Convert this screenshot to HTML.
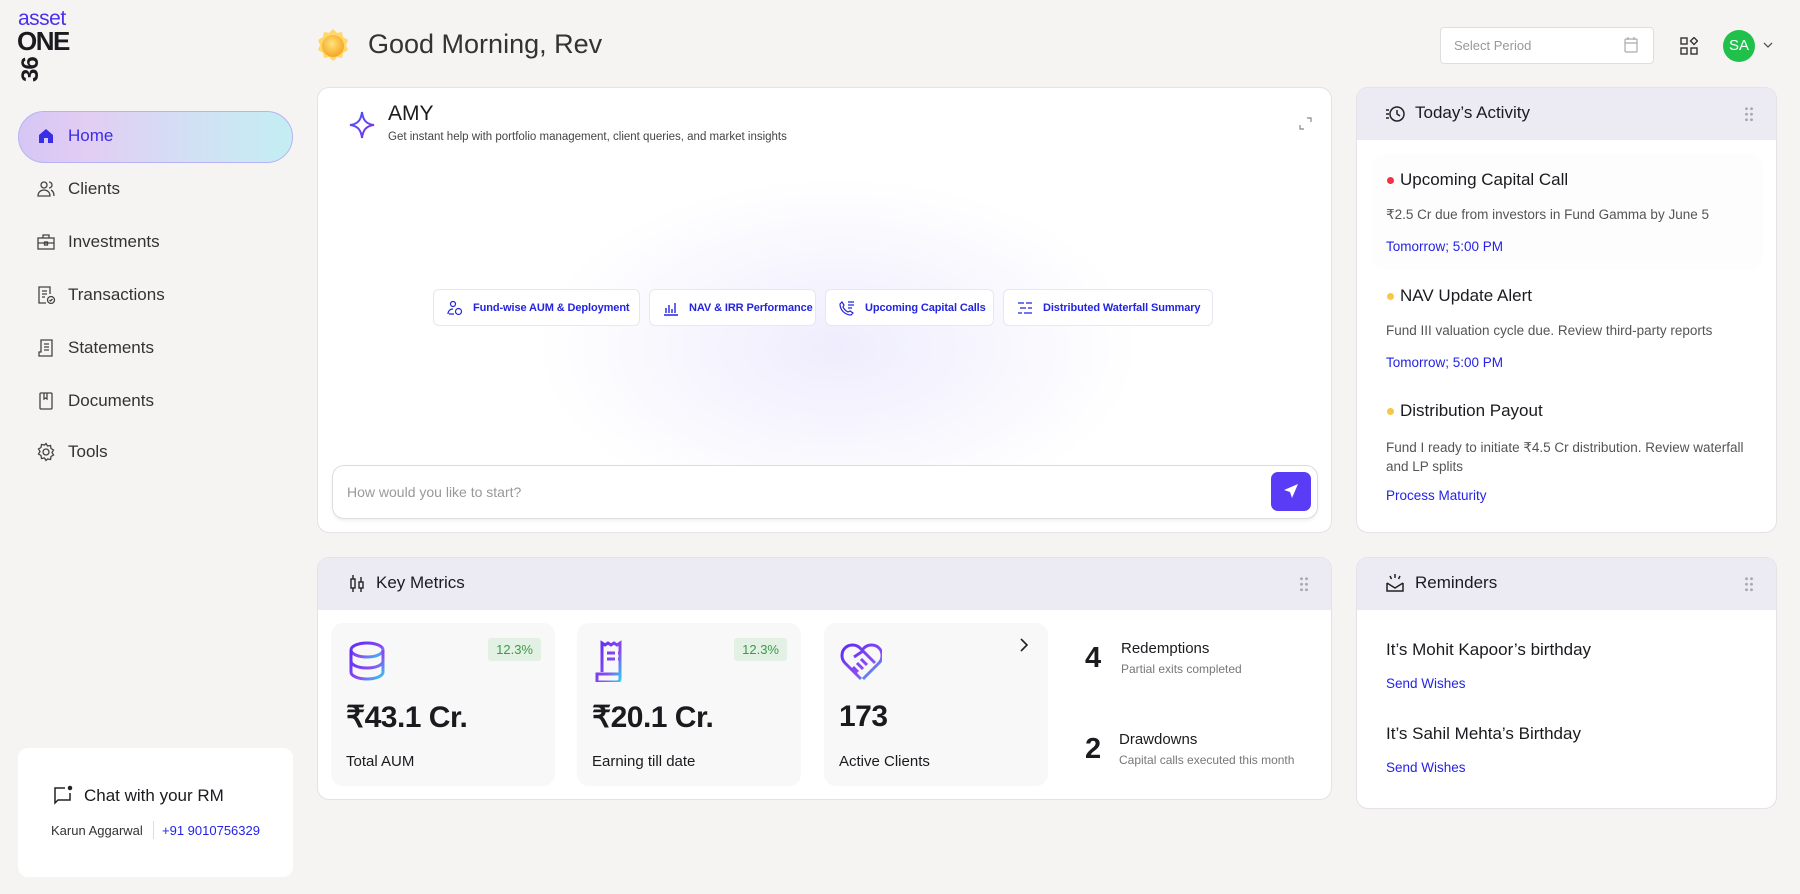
<!DOCTYPE html>
<html><head><meta charset="utf-8"><style>
*{margin:0;padding:0;box-sizing:border-box}
body{width:1800px;height:894px;background:#f5f4f2;font-family:"Liberation Sans",sans-serif;color:#1b1b1f;position:relative;overflow:hidden}
.a{position:absolute}
.card{position:absolute;background:#fff;border:1px solid #e3e2e6;border-radius:12px;overflow:hidden}
.hdr{position:absolute;left:0;top:0;right:0;height:52px;background:#ecebf3;}
.hdr .t{position:absolute;left:60px;top:15px;font-size:17px;font-weight:500}
.dots{position:absolute;right:22px;top:18px;width:10px;height:16px;background-image:radial-gradient(circle,#a9a9b0 1.3px,transparent 1.6px);background-size:5px 5.5px}
.nav{position:absolute;left:36px;font-size:17px;color:#333;display:flex;align-items:center;gap:0}
.nav svg{width:20px;height:20px;margin-right:12px}
.chip{position:absolute;top:289px;height:37px;border:1px solid #e7e6f3;border-radius:6px;background:#fff;font-size:11px;font-weight:bold;color:#2424e0;display:flex;align-items:center;padding-left:13px;gap:10px;white-space:nowrap;letter-spacing:-0.1px}
.link{color:#2323e8;font-size:13.5px}
.m{position:absolute;top:623px;width:224px;height:163px;background:#f8f8f8;border-radius:12px}
.m .v{position:absolute;left:15px;top:77px;font-size:30px;font-weight:bold;letter-spacing:-0.5px}
.m .l{position:absolute;left:15px;top:130px;font-size:15px}
.badge{position:absolute;right:14px;top:15px;background:#e2f1e3;color:#3b9a48;font-size:13px;padding:4px 8px;border-radius:3px}
</style></head><body>
<!-- logo -->
<div class="a" style="left:18px;top:7px;font-size:21px;color:#4b2ff0;font-weight:500;letter-spacing:-0.5px">asset</div>
<div class="a" style="left:17px;top:26px;font-size:26px;font-weight:bold;letter-spacing:-1.5px">ONE</div>
<svg class="a" style="left:16px;top:50px" width="30" height="34" viewBox="0 0 30 34"><text transform="translate(22,32) rotate(-90)" font-family="Liberation Sans, sans-serif" font-size="24" font-weight="bold" letter-spacing="-1" fill="#1b1b1f">36</text></svg>

<!-- nav -->
<div class="a" style="left:18px;top:111px;width:275px;height:52px;border-radius:26px;background:linear-gradient(90deg,#d6c6f5 0%,#e2cdf3 25%,#cfe3f4 70%,#c3eef3 100%);border:1px solid #b7b3f2"></div>
<div class="nav" style="top:126px;color:#3a2de8;font-weight:500"><svg viewBox="0 0 20 20"><path d="M3 9L10 3l7 6v8h-5v-5H8v5H3z" fill="#3a2de8"/></svg>Home</div>
<div class="nav" style="top:179px"><svg viewBox="0 0 20 20" fill="none" stroke="#444" stroke-width="1.3"><circle cx="8" cy="6" r="3"/><path d="M2 17c0-4 3-6 6-6s6 2 6 6zM13 3a3 3 0 010 6M15 11c2 1 3 3 3 6"/></svg>Clients</div>
<div class="nav" style="top:232px"><svg viewBox="0 0 20 20" fill="none" stroke="#444" stroke-width="1.3"><rect x="2" y="6" width="16" height="11"/><path d="M7 6V3h6v3M2 11h16"/><rect x="8.5" y="10" width="3" height="3"/></svg>Investments</div>
<div class="nav" style="top:285px"><svg viewBox="0 0 20 20" fill="none" stroke="#444" stroke-width="1.3"><path d="M14 9V2H3v16h7M6 6h5M6 9h5M6 12h3"/><circle cx="15" cy="15" r="3.5"/><path d="M13.5 15l1 1 2-2"/></svg>Transactions</div>
<div class="nav" style="top:338px"><svg viewBox="0 0 20 20" fill="none" stroke="#444" stroke-width="1.3"><path d="M5 2h11v16H3v-4h2zM8 6h5M8 9h5M8 12h5"/></svg>Statements</div>
<div class="nav" style="top:391px"><svg viewBox="0 0 20 20" fill="none" stroke="#444" stroke-width="1.3"><rect x="4" y="2" width="12" height="16" rx="1"/><path d="M8 2v6l1.5-1L11 8V2"/></svg>Documents</div>
<div class="nav" style="top:442px"><svg viewBox="0 0 20 20" fill="none" stroke="#444" stroke-width="1.3"><circle cx="10" cy="10" r="3"/><path d="M10 1.5l1.5 2.5 3-.5.5 3 2.5 1.5-1.5 2.5 1.5 2.5-2.5 1.5-.5 3-3-.5L10 18.5 8.5 16l-3 .5-.5-3L2.5 12 4 9.5 2.5 7 5 5.5l.5-3 3 .5z"/></svg>Tools</div>

<!-- chat RM -->
<div class="a" style="left:18px;top:748px;width:275px;height:129px;background:#fff;border-radius:10px"></div>
<svg class="a" style="left:53px;top:785px" width="20" height="20" viewBox="0 0 20 20" fill="none" stroke="#222" stroke-width="1.5"><path d="M12 3H2v15l3-3h12V8"/><circle cx="17" cy="3" r="1.5" fill="#222"/></svg>
<div class="a" style="left:84px;top:786px;font-size:17px;font-weight:500">Chat with your RM</div>
<div class="a" style="left:51px;top:823px;font-size:13px;color:#333">Karun Aggarwal</div>
<div class="a" style="left:153px;top:821px;width:1px;height:18px;background:#ddd"></div>
<div class="a link" style="left:162px;top:823px;font-size:13px">+91 9010756329</div>

<!-- header -->
<svg class="a" style="left:314px;top:27px" width="38" height="38" viewBox="0 0 38 38"><defs><radialGradient id="sg" cx="0.45" cy="0.4" r="0.6"><stop offset="0" stop-color="#ffe27a"/><stop offset="1" stop-color="#f5a623"/></radialGradient></defs><path d="M19 2l4 4 5-1 1 5 5 3-2 5 2 5-5 3-1 5-5-1-4 4-4-4-5 1-1-5-5-3 2-5-2-5 5-3 1-5 5 1z" fill="#ffd869"/><circle cx="19" cy="19" r="11" fill="url(#sg)"/></svg>
<div class="a" style="left:368px;top:29px;font-size:27px;font-weight:500;color:#333">Good Morning, Rev</div>
<div class="a" style="left:1440px;top:27px;width:214px;height:37px;background:#fff;border:1px solid #dedede;border-radius:4px"></div>
<div class="a" style="left:1454px;top:38px;font-size:13px;color:#999">Select Period</div>
<svg class="a" style="left:1624px;top:37px" width="14" height="16" viewBox="0 0 14 16" fill="none" stroke="#aaa" stroke-width="1.2"><rect x="1" y="2" width="12" height="13" rx="1"/><path d="M1 6h12M4 0v3M10 0v3"/></svg>
<svg class="a" style="left:1680px;top:37px" width="18" height="18" viewBox="0 0 18 18" fill="none" stroke="#333" stroke-width="1.4"><rect x="1" y="1" width="6" height="6"/><rect x="1" y="11" width="6" height="6"/><rect x="11" y="11" width="6" height="6"/><path d="M14 0.5l3.5 3.5-3.5 3.5-3.5-3.5z"/></svg>
<div class="a" style="left:1723px;top:30px;width:32px;height:32px;border-radius:50%;background:#1fc14b;color:#fff;font-size:15px;font-weight:500;text-align:center;line-height:32px">SA</div>
<svg class="a" style="left:1763px;top:42px" width="10" height="7" viewBox="0 0 10 7" fill="none" stroke="#555" stroke-width="1.3"><path d="M1 1l4 4 4-4"/></svg>

<!-- AMY card -->
<div class="card" style="left:317px;top:87px;width:1015px;height:446px;background:radial-gradient(ellipse 300px 170px at 520px 260px,#efedfd 0%,#f7f6fe 50%,#fff 100%)">
  <svg class="a" style="left:30px;top:22px" width="28" height="30" viewBox="0 0 28 30"><defs><linearGradient id="ag" x1="0" y1="0" x2="1" y2="1"><stop offset="0" stop-color="#3b5bff"/><stop offset="1" stop-color="#8a2be2"/></linearGradient></defs><path d="M14 2C15 10 18 14 26 15 18 16 15 20 14 28 13 20 10 16 2 15 10 14 13 10 14 2z" fill="none" stroke="url(#ag)" stroke-width="2"/></svg>
  <div class="a" style="left:70px;top:14px;font-size:21px;font-weight:500">AMY</div>
  <div class="a" style="left:70px;top:43px;font-size:11.5px;color:#444">Get instant help with portfolio management, client queries, and market insights</div>
  <svg class="a" style="left:981px;top:29px" width="13" height="13" viewBox="0 0 13 13" fill="none" stroke="#888" stroke-width="1.2"><path d="M8 1h4v4M5 12H1V8"/></svg>
  <div class="a" style="left:14px;top:377px;width:986px;height:54px;background:#fff;border:1px solid #dcdbe0;border-radius:12px;box-shadow:0 2px 3px rgba(0,0,0,.06)"></div>
  <div class="a" style="left:29px;top:396px;font-size:14px;color:#999">How would you like to start?</div>
  <div class="a" style="left:953px;top:384px;width:40px;height:39px;border-radius:7px;background:#5b3cf6"></div>
  <svg class="a" style="left:963px;top:393px" width="20" height="20" viewBox="0 0 20 20"><path d="M17 3L3 9l6 2 2 6z" fill="#fff"/></svg>
</div>
<div class="chip" style="left:433px;width:207px"><svg width="16" height="16" viewBox="0 0 16 16" fill="none" stroke="#2424e0" stroke-width="1.2"><circle cx="6" cy="4" r="2.5"/><path d="M1 14c0-3 2-5 5-5M2 14h5"/><circle cx="11.5" cy="11.5" r="3"/></svg>Fund-wise AUM &amp; Deployment</div>
<div class="chip" style="left:649px;width:167px"><svg width="16" height="16" viewBox="0 0 16 16" fill="none" stroke="#2424e0" stroke-width="1.4"><path d="M1 15h14M3 13V8M6 13V5M9 13V9M12 13V3"/></svg>NAV &amp; IRR Performance</div>
<div class="chip" style="left:825px;width:169px"><svg width="16" height="16" viewBox="0 0 16 16" fill="none" stroke="#2424e0" stroke-width="1.2"><path d="M3 2l2 3-1 2c1 2 3 4 5 5l2-1 3 2-2 2C6 15 1 10 1 4zM9 2h6M9 5h6M9 8h4"/></svg>Upcoming Capital Calls</div>
<div class="chip" style="left:1003px;width:210px"><svg width="16" height="16" viewBox="0 0 16 16" fill="none" stroke="#2424e0" stroke-width="1.3"><path d="M1 3h6M9 3h6M3 8h6M11 8h4M1 13h4M7 13h8"/></svg>Distributed Waterfall Summary</div>

<!-- Activity -->
<div class="card" style="left:1356px;top:87px;width:421px;height:446px">
  <div class="hdr"><svg class="a" style="left:28px;top:17px" width="20" height="18" viewBox="0 0 20 18" fill="none" stroke="#222" stroke-width="1.5"><circle cx="12" cy="9" r="7"/><path d="M12 5v4l3 2M1 5h3M1 9h3M1 13h3"/></svg><div class="t" style="left:58px">Today’s Activity</div><div class="dots"></div></div>
  <div class="a" style="left:15px;top:66px;width:391px;height:115px;background:#fdfdfe;border-radius:12px"></div>
  <div class="a" style="left:30px;top:89px;width:7px;height:7px;border-radius:50%;background:#ee3344"></div>
  <div class="a" style="left:43px;top:82px;font-size:17px;font-weight:500">Upcoming Capital Call</div>
  <div class="a" style="left:29px;top:119px;font-size:13.5px;color:#555">₹2.5 Cr due from investors in Fund Gamma by June 5</div>
  <div class="a link" style="left:29px;top:151px">Tomorrow; 5:00 PM</div>
  <div class="a" style="left:30px;top:205px;width:7px;height:7px;border-radius:50%;background:#f7c843"></div>
  <div class="a" style="left:43px;top:198px;font-size:17px;font-weight:500">NAV Update Alert</div>
  <div class="a" style="left:29px;top:235px;font-size:13.5px;color:#555">Fund III valuation cycle due. Review third-party reports</div>
  <div class="a link" style="left:29px;top:267px">Tomorrow; 5:00 PM</div>
  <div class="a" style="left:30px;top:320px;width:7px;height:7px;border-radius:50%;background:#f7c843"></div>
  <div class="a" style="left:43px;top:313px;font-size:17px;font-weight:500">Distribution Payout</div>
  <div class="a" style="left:29px;top:350px;width:370px;font-size:13.5px;color:#555;line-height:19px">Fund I ready to initiate ₹4.5 Cr distribution. Review waterfall and LP splits</div>
  <div class="a link" style="left:29px;top:400px">Process Maturity</div>
</div>

<!-- Key metrics -->
<div class="card" style="left:317px;top:557px;width:1015px;height:243px">
  <div class="hdr"><svg class="a" style="left:32px;top:16px" width="14" height="20" viewBox="0 0 14 20" fill="none" stroke="#222" stroke-width="1.4"><rect x="1" y="5" width="4" height="9"/><rect x="9" y="8" width="4" height="6"/><path d="M3 1v4M3 14v4M11 3v5M11 14v4"/></svg><div class="t" style="left:58px">Key Metrics</div><div class="dots"></div></div>
</div>
<svg width="0" height="0" style="position:absolute"><defs><linearGradient id="ig" x1="0" y1="0" x2="1" y2="1"><stop offset="0" stop-color="#5b2cf5"/><stop offset="0.6" stop-color="#8a4bf2"/><stop offset="1" stop-color="#2fd0f0"/></linearGradient></defs></svg>
<div class="m" style="left:331px"><svg class="a" style="left:17px;top:18px" width="38" height="40" viewBox="0 0 38 40" fill="none" stroke="url(#ig)" stroke-width="3"><ellipse cx="19" cy="9" rx="16" ry="7"/><path d="M3 9v22c0 4 7 7 16 7s16-3 16-7V9M3 20c0 4 7 7 16 7s16-3 16-7"/></svg><div class="badge">12.3%</div><div class="v">₹43.1 Cr.</div><div class="l">Total AUM</div></div>
<div class="m" style="left:577px"><svg class="a" style="left:17px;top:17px" width="38" height="42" viewBox="0 0 38 42" fill="none" stroke="url(#ig)" stroke-width="3"><path d="M8 32V3l3 2 3-2 3 2 3-2 3 2 3-2v36c0 2-2 3-4 3H3v-8h23M13 13h8M13 19h8M24 13h1M24 19h1"/></svg><div class="badge">12.3%</div><div class="v">₹20.1 Cr.</div><div class="l">Earning till date</div></div>
<div class="m" style="left:824px"><svg class="a" style="left:16px;top:16px" width="42" height="42" viewBox="0 0 42 42" fill="none" stroke="url(#ig)" stroke-width="3"><path d="M21 40L5 24C1 20 1 13 5 9s11-4 15 0l2 2 2-2c4-4 11-4 15 0s4 11 0 15L23 40M14 18l9-6 12 12M17 24l6 6M21 20l6 6M13 28l5 5"/></svg><svg class="a" style="left:196px;top:15px" width="9" height="14" viewBox="0 0 9 14" fill="none" stroke="#222" stroke-width="1.6"><path d="M1 1l6 6-6 6"/></svg><div class="v">173</div><div class="l">Active Clients</div></div>
<div class="a" style="left:1085px;top:642px;font-size:29px;font-weight:bold">4</div>
<div class="a" style="left:1121px;top:640px;font-size:15px;font-weight:500">Redemptions</div>
<div class="a" style="left:1121px;top:662px;font-size:12px;color:#777">Partial exits completed</div>
<div class="a" style="left:1085px;top:733px;font-size:29px;font-weight:bold">2</div>
<div class="a" style="left:1119px;top:731px;font-size:15px;font-weight:500">Drawdowns</div>
<div class="a" style="left:1119px;top:753px;font-size:12px;color:#777">Capital calls executed this month</div>

<!-- Reminders -->
<div class="card" style="left:1356px;top:557px;width:421px;height:252px">
  <div class="hdr"><svg class="a" style="left:28px;top:15px" width="20" height="20" viewBox="0 0 20 20" fill="none" stroke="#222" stroke-width="1.5"><path d="M2 10v8h16v-8M2 10l8 5 8-5M10 1v4M5 3l1.5 3M15 3l-1.5 3"/></svg><div class="t" style="left:58px">Reminders</div><div class="dots"></div></div>
  <div class="a" style="left:29px;top:82px;font-size:17px;font-weight:500">It’s Mohit Kapoor’s birthday</div>
  <div class="a link" style="left:29px;top:118px">Send Wishes</div>
  <div class="a" style="left:29px;top:166px;font-size:17px;font-weight:500">It’s Sahil Mehta’s Birthday</div>
  <div class="a link" style="left:29px;top:202px">Send Wishes</div>
</div>
</body></html>
